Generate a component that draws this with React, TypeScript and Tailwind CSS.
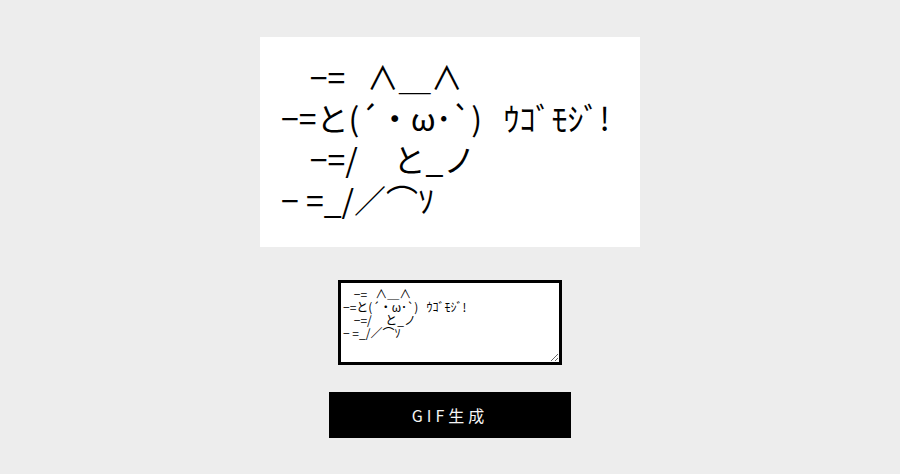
import React, { useState } from "react";

const DEFAULT_AA = [
  "    −=   ∧＿∧",
  "−=と(´・ω･`)   ｳｺﾞﾓｼﾞ!",
  "    −=/     と_ノ",
  "− =_/／⌒ｿ",
].join("\n");

const App: React.FC = () => {
  const [aa, setAa] = useState(DEFAULT_AA);

  return (
    <div className="min-h-[474px] bg-[#ededed] flex flex-col items-center pt-[37px] font-['Noto_Sans_CJK_JP',sans-serif]">
      {/* preview */}
      <div className="w-[380px] h-[210px] bg-white pl-[21px] pt-[19px] overflow-hidden">
        <pre className="whitespace-pre text-[32px] leading-[41px] text-black font-['Noto_Sans_CJK_JP',sans-serif]">
          {aa}
        </pre>
      </div>

      {/* input */}
      <textarea
        className="mt-[33px] w-[224px] h-[85px] border-[3px] border-black bg-white px-[2px] pt-[4px] text-[12px] leading-[13px] text-black font-['Noto_Sans_CJK_JP',sans-serif] whitespace-pre outline-none"
        value={aa}
        onChange={(e) => setAa(e.target.value)}
        spellCheck={false}
      />

      <button className="mt-[27px] w-[242px] h-[46px] bg-black text-[#f5f5f5] text-[16px] tracking-[4px] font-['Noto_Sans_CJK_JP',sans-serif]">
        GIF生成
      </button>
    </div>
  );
};

export default App;
